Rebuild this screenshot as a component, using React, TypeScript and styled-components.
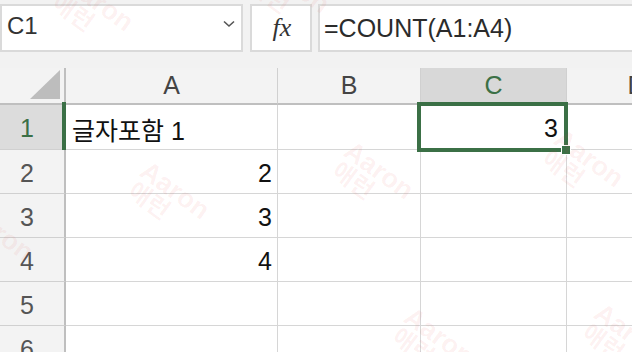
import React from "react";
import styled, { createGlobalStyle } from "styled-components";

const GlobalStyle = createGlobalStyle`
  html, body {
    margin: 0;
    padding: 0;
    background: #ffffff;
    overflow: hidden;
  }
`;

const green = "#3b7046";
const font = `"Liberation Sans", "Noto Sans CJK KR", Arial, sans-serif`;

const Screen = styled.div`
  position: relative;
  width: 632px;
  height: 352px;
  overflow: hidden;
  background: #fff;
  font-family: ${font};
`;

const Toolbar = styled.div`
  display: flex;
  align-items: flex-start;
  height: 68px;
  box-sizing: border-box;
  padding-top: 4px;
  background: #f2f2f2;
`;

const Box = styled.div<{ $w?: number; $gap?: number }>`
  display: flex;
  align-items: center;
  box-sizing: border-box;
  height: 48px;
  width: ${(p) => (p.$w ? `${p.$w}px` : "auto")};
  flex: ${(p) => (p.$w ? "none" : "1 0 auto")};
  margin-left: ${(p) => p.$gap ?? 0}px;
  margin-right: ${(p) => (p.$w ? 0 : -20)}px;
  background: #fff;
  border: 2px solid #dadada;
  color: #2b2b2b;
  font-size: 25px;
`;

const NameText = styled.span`
  flex: 1;
  padding-left: 5px;
  margin-top: -4px;
  font-size: 24px;
  color: #333;
`;

const Chevron = styled.svg`
  margin-right: 6px;
  margin-top: -8px;
`;

const Fx = styled.span`
  width: 100%;
  text-align: center;
  padding-left: 2px;
  font-family: "Liberation Serif", "Times New Roman", serif;
  font-style: italic;
  font-size: 26px;
  color: #333;
`;

const FormulaText = styled.span`
  padding-left: 4px;
  color: #2b2b2b;
`;

const Sheet = styled.div`
  display: grid;
  grid-template-columns: 66px 212px 143px 146px 140px;
  grid-template-rows: 37px 45px repeat(5, 44px);
`;

const Corner = styled.div`
  position: relative;
  background: #f3f3f3;
  border-right: 2px solid #bfbfbf;
  border-bottom: 2px solid #bfbfbf;
  &::after {
    content: "";
    position: absolute;
    left: 30px;
    top: 2px;
    width: 30px;
    height: 29px;
    background: #bdbdbd;
    clip-path: polygon(100% 0, 100% 100%, 0 100%);
  }
`;

const ColHead = styled.div<{ $active?: boolean }>`
  display: flex;
  align-items: center;
  justify-content: center;
  background: ${(p) => (p.$active ? "#d8d8d8" : "#f3f3f3")};
  color: ${(p) => (p.$active ? green : "#444")};
  border-right: 1px solid #d0d0d0;
  border-bottom: 2px solid #bfbfbf;
  font-size: 25px;
`;

const RowHead = styled.div<{ $active?: boolean }>`
  position: relative;
  display: flex;
  align-items: center;
  justify-content: center;
  padding: 3px 10px 0 0;
  background: ${(p) => (p.$active ? "#dcdcdc" : "#f3f3f3")};
  color: ${(p) => (p.$active ? green : "#555")};
  border-right: 2px solid #bfbfbf;
  border-bottom: 1px solid #d0d0d0;
  font-size: 25px;
  ${(p) =>
    p.$active &&
    `
    &::after {
      content: "";
      position: absolute;
      right: -2px;
      top: -3px;
      bottom: -1px;
      width: 4px;
      background: ${green};
    }
  `}
`;

const Cell = styled.div<{ $num?: boolean; $selected?: boolean }>`
  position: relative;
  display: flex;
  align-items: center;
  justify-content: ${(p) => (p.$num ? "flex-end" : "flex-start")};
  padding: 3px ${(p) => (p.$selected ? 8 : 5)}px 0 6px;
  border-right: 1px solid #d6d6d6;
  border-bottom: 1px solid #d6d6d6;
  color: #111;
  font-size: 25px;
  white-space: nowrap;
`;

const Selection = styled.div`
  position: absolute;
  left: -4px;
  right: -2px;
  top: -3px;
  bottom: -3px;
  border: 4px solid ${green};
  z-index: 2;
  pointer-events: none;
`;

const Handle = styled.div`
  position: absolute;
  right: -5px;
  bottom: -6px;
  width: 8px;
  height: 8px;
  background: ${green};
  border: 1px solid #fff;
  z-index: 3;
`;

const Watermark = styled.div`
  position: absolute;
  z-index: 4;
  pointer-events: none;
  transform: translate(-50%, -50%) rotate(36deg);
  display: flex;
  flex-direction: column;
  align-items: flex-start;
  font-family: ${font};
  font-weight: 700;
  line-height: 24px;
  color: rgba(225, 60, 60, 0.07);
  font-size: 27px;
  span + span {
    padding-left: 2px;
    font-size: 24px;
  }
`;

const columns = ["A", "B", "C", "D"];

const rows: { [col: string]: string }[] = [
  { A: "글자포함 1", C: "3" },
  { A: "2" },
  { A: "3" },
  { A: "4" },
  {},
  {},
];

const marks = [
  [92, 12],
  [288, -6],
  [168, 200],
  [372, 180],
  [582, 168],
  [-8, 242],
  [432, 346],
  [622, 342],
];

const App = () => {
  return (
    <Screen>
      <GlobalStyle />
      <Toolbar>
        <Box $w={243}>
          <NameText>C1</NameText>
          <Chevron width="12" height="8" viewBox="0 0 12 8">
            <polyline
              points="1,1.5 6,6 11,1.5"
              fill="none"
              stroke="#555"
              strokeWidth="1.6"
            />
          </Chevron>
        </Box>
        <Box $w={62} $gap={7}>
          <Fx>fx</Fx>
        </Box>
        <Box $gap={6}>
          <FormulaText>=COUNT(A1:A4)</FormulaText>
        </Box>
      </Toolbar>

      <Sheet>
        <Corner />
        {columns.map((c) => (
          <ColHead key={c} $active={c === "C"}>
            {c}
          </ColHead>
        ))}
        {rows.map((row, i) => (
          <React.Fragment key={i}>
            <RowHead $active={i === 0}>{i + 1}</RowHead>
            {columns.map((c) => {
              const value = row[c] ?? "";
              const selected = i === 0 && c === "C";
              return (
                <Cell
                  key={c}
                  $num={/^\d+$/.test(value)}
                  $selected={selected}
                >
                  {value}
                  {selected && (
                    <>
                      <Selection />
                      <Handle />
                    </>
                  )}
                </Cell>
              );
            })}
          </React.Fragment>
        ))}
      </Sheet>

      {marks.map(([x, y], i) => (
        <Watermark key={i} style={{ left: x, top: y }}>
          <span>Aaron</span>
          <span>애런</span>
        </Watermark>
      ))}
    </Screen>
  );
};

export default App;
